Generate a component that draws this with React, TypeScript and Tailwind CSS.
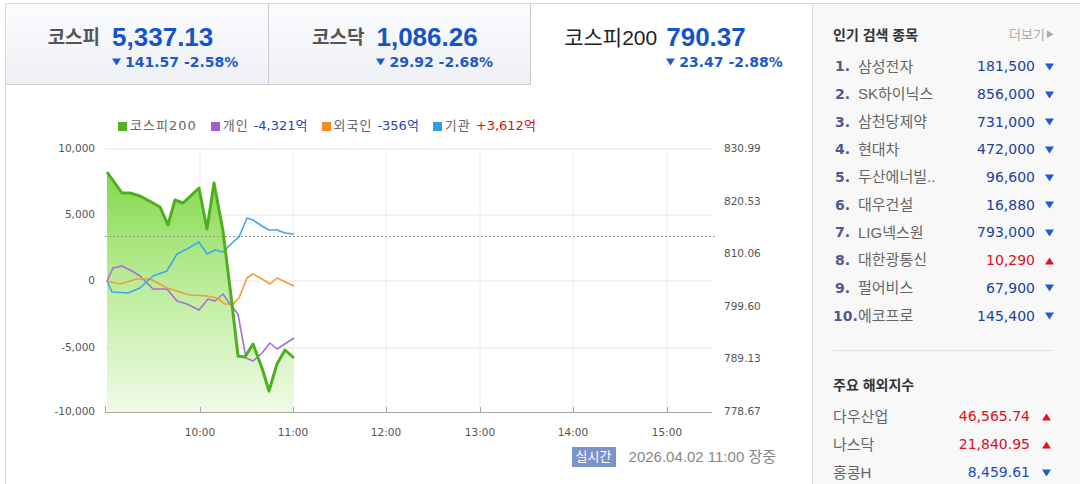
import React from "react";

const TABS = [
  { label: "코스피", value: "5,337.13", diff: "141.57", rate: "-2.58%", w: "w-[263px]", pad: "pl-[12px]" },
  { label: "코스닥", value: "1,086.26", diff: "29.92", rate: "-2.68%", w: "w-[262px]", pad: "pl-[6px]" },
];

const POPULAR = [
  { name: "삼성전자", price: "181,500", up: false },
  { name: "SK하이닉스", price: "856,000", up: false },
  { name: "삼천당제약", price: "731,000", up: false },
  { name: "현대차", price: "472,000", up: false },
  { name: "두산에너빌..", price: "96,600", up: false },
  { name: "대우건설", price: "16,880", up: false },
  { name: "LIG넥스원", price: "793,000", up: false },
  { name: "대한광통신", price: "10,290", up: true },
  { name: "펄어비스", price: "67,900", up: false },
  { name: "에코프로", price: "145,400", up: false },
];

const WORLD = [
  { name: "다우산업", price: "46,565.74", up: true },
  { name: "나스닥", price: "21,840.95", up: true },
  { name: "홍콩H", price: "8,459.61", up: false },
];

const GREEN =
  "107,171 122,192 130,192 140,195 153,202 160,206 168,224 175,199 183,202 199,187 207,228 214,182 223,230 232,303 238,355 245,356 253,343 262,367 269,390 277,363 285,349 294,357";
const PURPLE =
  "107,280 113,267 122,265 132,270 140,275 150,285 153,288 167,288 177,300 187,303 199,309 208,298 215,300 223,293 230,303 238,313 246,357 253,360 262,352 270,342 277,348 294,337";
const ORANGE =
  "107,280 120,283 137,278 150,278 167,287 190,294 207,295 217,297 225,303 233,303 239,297 247,277 253,273 262,278 270,283 277,277 294,285";
const BLUE =
  "107,280 112,291 128,292 140,287 153,275 167,270 168,268 177,253 187,248 199,241 207,253 215,249 223,251 232,242 239,236 247,217 253,219 262,225 269,229 277,229 285,232 294,233";

const LEFT_Y = [
  ["10,000", 148],
  ["5,000", 214],
  ["0", 280],
  ["-5,000", 347],
  ["-10,000", 411],
] as const;
const RIGHT_Y = [
  ["830.99", 148],
  ["820.53", 200.6],
  ["810.06", 253.2],
  ["799.60", 305.8],
  ["789.13", 358.4],
  ["778.67", 411],
] as const;
const HOURS = [
  ["10:00", 200],
  ["11:00", 293],
  ["12:00", 386],
  ["13:00", 480],
  ["14:00", 573],
  ["15:00", 667],
] as const;

const num = { fontFamily: '"DejaVu Sans", sans-serif' };
const kr = { fontFamily: '"Liberation Sans", "Noto Sans CJK KR", sans-serif' };
const legendFont = { fontFamily: '"DejaVu Sans", "Noto Sans CJK KR", sans-serif' };
const big = { fontFamily: '"Liberation Sans", sans-serif' };

function Tri({ up, className = "" }: { up: boolean; className?: string }) {
  return (
    <svg width="9" height="8" viewBox="0 0 9 8" className={className}>
      {up ? (
        <polygon points="4.5,0.5 9,7.5 0,7.5" fill="#e0161f" />
      ) : (
        <polygon points="0,0.5 9,0.5 4.5,7.5" fill="#1e5bd0" />
      )}
    </svg>
  );
}

function Chart() {
  return (
    <svg width="806" height="310" viewBox="6 134 806 310" className="block">
      <defs>
        <linearGradient id="gfill" x1="0" y1="0" x2="0" y2="1">
          <stop offset="0%" stopColor="#84d84c" />
          <stop offset="45%" stopColor="#b9ec96" />
          <stop offset="100%" stopColor="#f0fbe8" />
        </linearGradient>
      </defs>
      {[148, 214, 280, 347].map((y) => (
        <line key={y} x1="105" x2="712" y1={y} y2={y} stroke="#e6e6e6" />
      ))}
      {HOURS.map(([, x]) => (
        <line key={x} x1={x} x2={x} y1="148" y2="411" stroke="#ececec" />
      ))}
      <polygon points={`${GREEN} 294,411 107,411`} fill="url(#gfill)" />
      <line x1="105" x2="715" y1="235.5" y2="235.5" stroke="#9a9a9a" strokeDasharray="2 2" />
      <polyline points={PURPLE} fill="none" stroke="#a86ed8" strokeWidth="1.6" strokeLinejoin="round" />
      <polyline points={ORANGE} fill="none" stroke="#f39a3a" strokeWidth="1.6" strokeLinejoin="round" />
      <polyline points={BLUE} fill="none" stroke="#3ea6ec" strokeWidth="1.6" strokeLinejoin="round" />
      <polyline points={GREEN} fill="none" stroke="#4faf1f" strokeWidth="3" strokeLinejoin="round" />
      <line x1="105" x2="712" y1="411.5" y2="411.5" stroke="#a8a8a8" />
      <line x1="105.5" x2="105.5" y1="405" y2="411" stroke="#a8a8a8" />
      {HOURS.map(([, x]) => (
        <line key={`t${x}`} x1={x + 0.5} x2={x + 0.5} y1="406" y2="411" stroke="#a8a8a8" />
      ))}
      <g fontSize="10.5" fill="#555" style={num}>
        {LEFT_Y.map(([t, y]) => (
          <text key={t} x="95" y={y} textAnchor="end" dominantBaseline="middle">
            {t}
          </text>
        ))}
        {RIGHT_Y.map(([t, y]) => (
          <text key={t} x="724" y={y} dominantBaseline="middle">
            {t}
          </text>
        ))}
        {HOURS.map(([t, x]) => (
          <text key={t} x={x} y="432" textAnchor="middle" dominantBaseline="middle">
            {t}
          </text>
        ))}
      </g>
    </svg>
  );
}

function Legend() {
  const items = [
    { color: "bg-[#52b11e]", label: "코스피200" },
    { color: "bg-[#a060d0]", label: "개인", val: "-4,321억", red: false },
    { color: "bg-[#f28a25]", label: "외국인", val: "-356억", red: false },
    { color: "bg-[#2f9ee8]", label: "기관", val: "+3,612억", red: true },
  ];
  return (
    <div className="flex h-[18px] items-center gap-[14px] pl-[112px] text-[13px]" style={legendFont}>
      {items.map((it) => (
        <div key={it.label} className="flex items-center">
          <span className={`mr-[3px] inline-block h-[9px] w-[9px] ${it.color}`} />
          <span className="tracking-[1px] text-[#666]">{it.label}</span>
          {it.val && (
            <span className={`ml-[5px] ${it.red ? "text-[#d8101c]" : "text-[#2346b4]"}`}>{it.val}</span>
          )}
        </div>
      ))}
    </div>
  );
}

function Quote({ value, change }: { value: string; change: string }) {
  return (
    <div className="flex flex-col">
      <span className="text-[26px] font-bold leading-[30px] text-[#1454c8]" style={big}>
        {value}
      </span>
      <span className="flex items-center text-[14px] font-bold leading-[20px] text-[#1e5bc6]" style={num}>
        <Tri up={false} className="mr-[4px]" />
        {change}
      </span>
    </div>
  );
}

export default function App() {
  return (
    <div className="h-[484px] w-[1080px] overflow-hidden bg-white pl-[5px] pt-[3px]">
      <div className="flex h-full border-l border-t border-[#d6d9de]">
        {/* 지수 탭 + 차트 */}
        <div className="w-[806px] shrink-0">
          <div className="flex h-[81px]">
            {TABS.map((t) => (
              <div
                key={t.label}
                className={`${t.w} ${t.pad} flex items-start justify-center border-b border-r border-[#c8ccd3] bg-gradient-to-b from-[#fbfcfe] to-[#eef0f5] pt-[18px]`}
              >
                <span className="mr-[12px] text-[19px] font-bold leading-[32px] text-[#555]" style={kr}>
                  {t.label}
                </span>
                <Quote value={t.value} change={`${t.diff} ${t.rate}`} />
              </div>
            ))}
            <div className="flex flex-1 items-start justify-center pl-[4px] pt-[18px]">
              <span className="mr-[9px] text-[21px] leading-[32px] text-[#222]" style={kr}>
                코스피200
              </span>
              <Quote value="790.37" change="23.47 -2.88%" />
            </div>
          </div>

          <div className="pt-[32px]">
            <Legend />
            <Chart />
            <div className="mt-[2px] flex h-[20px] items-center justify-end pr-[36px]">
              <span
                className="mr-[13px] flex h-[20px] w-[44px] items-center justify-center bg-[#7b93c8] text-[13px] text-white"
                style={kr}
              >
                실시간
              </span>
              <span className="text-[15px] text-[#888]" style={kr}>
                2026.04.02 11:00 장중
              </span>
            </div>
          </div>
        </div>

        {/* 오른쪽 패널 */}
        <div className="flex-1 border-l border-[#dcdcdc] bg-[#f8f8f9] pl-[20px] pr-[26px] pt-[21px]">
          <div className="flex h-[20px] items-center justify-between" style={kr}>
            <span className="text-[14px] font-bold text-[#333]">인기 검색 종목</span>
            <span className="flex items-center text-[13px] text-[#aaa]">
              더보기
              <span className="ml-[1px] text-[8px]">▶</span>
            </span>
          </div>
          <div className="mt-[8px]">
            {POPULAR.map((p, i) => (
              <div key={p.name} className="flex h-[27.7px] items-center">
                <span
                  className={`w-[25px] text-left text-[14px] font-bold text-[#4e5a8c] ${i === 9 ? "" : "pl-[2px]"}`}
                  style={num}
                >
                  {i + 1}.
                </span>
                <span className="flex-1 whitespace-nowrap text-[15px] text-[#666]" style={kr}>
                  {p.name}
                </span>
                <span className={`text-[14px] ${p.up ? "text-[#d8101c]" : "text-[#21409e]"}`} style={num}>
                  {p.price}
                </span>
                <Tri up={p.up} className="ml-[10px]" />
              </div>
            ))}
          </div>
          <div className="mt-[20px] h-px bg-[#e2e2e2]" />
          <div className="mt-[25px] flex h-[20px] items-center text-[14px] font-bold text-[#333]" style={kr}>
            주요 해외지수
          </div>
          <div className="mt-[7px] pr-[3px]">
            {WORLD.map((w) => (
              <div key={w.name} className="flex h-[28px] items-center">
                <span className="flex-1 text-[15px] text-[#666]" style={kr}>
                  {w.name}
                </span>
                <span className={`text-[14px] ${w.up ? "text-[#d8101c]" : "text-[#1e4db8]"}`} style={num}>
                  {w.price}
                </span>
                <Tri up={w.up} className="ml-[12px]" />
              </div>
            ))}
          </div>
        </div>
      </div>
    </div>
  );
}
